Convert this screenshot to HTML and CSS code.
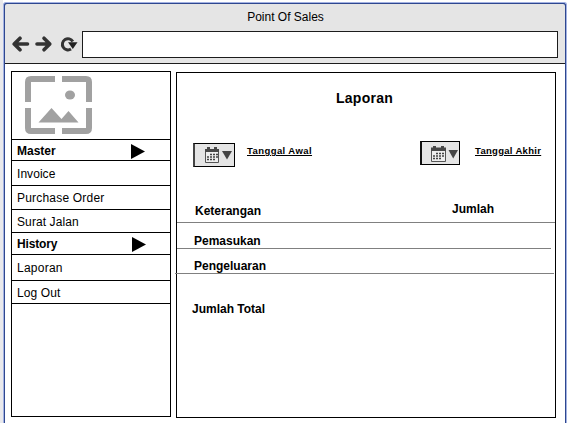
FILE: index.html
```html
<!DOCTYPE html>
<html lang="id">
<head>
<meta charset="utf-8">
<title>Point Of Sales</title>
<link rel="stylesheet" href="styles.css">
</head>
<body>
<div class="window">
  <header class="chrome">
    <div class="title">Point Of Sales</div>
    <div class="toolbar">
      <svg class="nav" width="70" height="20" viewBox="0 0 70 20">
        <g fill="none" stroke="#333" stroke-width="3.6" stroke-linecap="round" stroke-linejoin="round">
          <path d="M8 4.200L2.200 10l5.800 5.800M3 10H15.500"/>
          <path d="M32 4.200l5.800 5.800-5.800 5.800M37 10H25"/>
          <path d="M59 15A5.600 5.600 0 1 1 60.800 7.400" stroke-width="3" stroke-linecap="butt"/>
        </g>
        <path d="M56 8.300H65.500L60.800 15Z" fill="#222"/>
      </svg>
      <div class="address"></div>
    </div>
  </header>
  <div class="content">
    <nav class="sidebar">
      <div class="logo">
        <svg width="67" height="58" viewBox="0 0 67 58">
          <path d="M3 26V6Q3 3 6 3H30M37 3H61Q64 3 64 6V26M64 32V52Q64 55 61 55H37M30 55H6Q3 55 3 52V32" fill="none" stroke="#a1a1a1" stroke-width="6"/>
          <path d="M13.500 46.500L26.500 32L36.500 43L43.500 35L53.500 46.500Z" fill="#a1a1a1"/>
          <ellipse cx="45" cy="19" rx="5" ry="4.500" fill="#a1a1a1"/>
        </svg>
      </div>
      <div class="item head master"><span>Master</span><svg width="14" height="15" viewBox="0 0 14 15"><path d="M0 0L14 7.500L0 15Z"/></svg></div>
      <div class="item invoice"><span>Invoice</span></div>
      <div class="item order"><span>Purchase Order</span></div>
      <div class="item surat"><span>Surat Jalan</span></div>
      <div class="item head history"><span>History</span><svg width="14" height="15" viewBox="0 0 14 15"><path d="M0 0L14 7.500L0 15Z"/></svg></div>
      <div class="item laporan"><span>Laporan</span></div>
      <div class="item logout"><span>Log Out</span></div>
    </nav>
    <main class="report">
      <h1>Laporan</h1>
      <div class="filters">
        <div class="picker start">
          <svg width="29" height="18" viewBox="0 0 29 18">
            <path d="M1.500 3.500H14.500V15.500H1.500Z" fill="#eee" stroke="#555"/>
            <path d="M1 2H15V5H1ZM3 0H6V3H3ZM10 0H13V3H10Z" fill="#484848"/>
            <path d="M6 7.500H14M3 10H14M3 12.500H11" stroke="#444" stroke-width="1.500" stroke-dasharray="2 1"/>
            <path d="M18 4H28L23 12.500Z" fill="#444"/>
          </svg>
        </div>
        <span class="date-label">Tanggal Awal</span>
        <div class="picker end">
          <svg width="29" height="18" viewBox="0 0 29 18">
            <path d="M1.500 3.500H15.500V16.500H1.500Z" fill="#eee" stroke="#555"/>
            <path d="M1 2.500H16V6H1ZM3 1H6V4H3ZM11 1H14V4H11Z" fill="#484848"/>
            <path d="M6 8.500H14M3 11H14M3 13.500H11" stroke="#444" stroke-width="1.500" stroke-dasharray="2 1"/>
            <path d="M18.500 5H28L23.200 13.500Z" fill="#444"/>
          </svg>
        </div>
        <span class="date-label last">Tanggal Akhir</span>
      </div>
      <div class="row columns"><span>Keterangan</span><span class="amount">Jumlah</span></div>
      <div class="row income"><span>Pemasukan</span></div>
      <div class="row expense"><span>Pengeluaran</span></div>
      <div class="total"><span>Jumlah Total</span></div>
    </main>
  </div>
</div>
</body>
</html>
```
FILE: styles.css
```css
* { box-sizing: border-box; }
body {
  margin: 0;
  height: 423px;
  overflow: hidden;
  padding: 2px 0 0 3px;
  background: linear-gradient(to right, #e9e9ec 3px, #fff 3px);
  color: #000;
  font: 12px/14px "Liberation Sans", Arial, sans-serif;
}
svg { display: block; flex: none; }
.window {
  height: 421px;
  border: 1px solid #a3b2e2;
  border-bottom: 0;
  border-radius: 3px 3px 0 0;
  background: #2e478f;
  padding: 1px 1px 0 1px;
  display: flex;
  flex-direction: column;
}
.chrome {
  height: 60px;
  width: 560px;
  background: #e5e5e5;
  border-bottom: 1px solid #1c1c1c;
  border-radius: 2px 2px 0 0;
}
.title { padding-top: 6px; height: 27px; text-align: center; padding-left: 1px; }
.toolbar { display: flex; }
.nav { margin: 3px 0 0 7px; }
.address { width: 476px; height: 27px; border: 1px solid #1c1c1c; background: #fff; }
.content {
  width: 560px;
  flex: 1;
  background: #fff;
  display: flex;
  align-items: flex-start;
  gap: 5px;
  padding: 7px 0 0 6px;
}
.sidebar { width: 160px; height: 346px; border: 1px solid #000; }
.logo { height: 68px; border-bottom: 1px solid #000; padding: 4px 0 0 13px; }
.item {
  display: flex;
  justify-content: space-between;
  align-items: flex-start;
  border-bottom: 1px solid #000;
  padding-left: 5px;
  letter-spacing: 0.2px;
}
.head { font-weight: bold; letter-spacing: 0; }
.master { height: 21px; padding-top: 4px; padding-right: 25px; }
.invoice { height: 25px; padding-top: 6px; letter-spacing: 0.05px; }
.order { height: 24px; padding-top: 5px; }
.surat { height: 23px; padding-top: 5px; letter-spacing: 0.1px; }
.history { height: 22px; padding-top: 4px; padding-right: 24px; letter-spacing: -0.15px; }
.laporan { height: 26px; padding-top: 6px; letter-spacing: 0.25px; }
.logout { height: 23px; padding-top: 5px; letter-spacing: 0.1px; }
.report {
  width: 380px;
  height: 346px;
  margin-top: 1px;
  border: 1px solid #000;
  font-weight: bold;
}
h1 { margin: 0; padding-top: 17px; height: 68px; font-size: 14px; line-height: 16px; text-align: center; padding-right: 3px; letter-spacing: 0.25px; }
.filters { display: flex; align-items: flex-start; height: 50px; padding-left: 16px; }
.picker { height: 24px; background: #e5e5e5; border: 1px solid #000; padding-top: 3px; }
.start { width: 42px; margin-top: 2px; border-left: 2px solid #444; padding-left: 9px; }
.end { width: 40px; border-left: 2px solid #111; padding-left: 8px; margin-left: 108px; }
.date-label {
  width: 65px;
  margin: 4px 0 0 12px;
  height: 12px;
  font: bold 9.500px/12px "Liberation Sans", Arial, sans-serif;
  letter-spacing: 0.42px;
  white-space: nowrap;
  text-decoration: underline;
}
.last { margin-left: 15px; width: 66px; letter-spacing: 0.3px; }
.row { border-bottom: 1px solid #808080; display: flex; padding-left: 17px; }
.columns { height: 32px; padding-top: 13px; padding-left: 18px; justify-content: space-between; padding-right: 61px; }
.amount { margin-top: -2px; }
.income { height: 26px; padding-top: 11px; width: 374px; }
.expense { height: 25px; padding-top: 10px; width: 379px; margin-left: -2px; padding-left: 19px; }
.total { padding: 28px 0 0 15px; }
```
